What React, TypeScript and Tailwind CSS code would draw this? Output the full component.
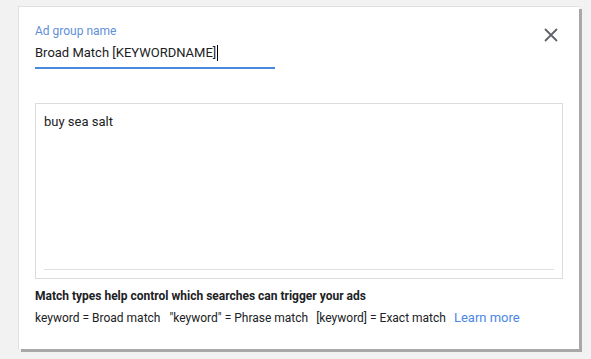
export default function App() {
  return (
    <div className="w-[591px] h-[359px] bg-[#f2f2f2] pt-[6px] pl-[18px] font-['Roboto',sans-serif]">
      <div className="relative w-[561px] h-[343px] bg-white border-l border-t border-[#e0e0e0] shadow-[3px_3px_0_#a8a8a8] px-4 pt-[16px]">
        <div className="w-[240px]">
          <div className="text-[12px] leading-[16px] text-[#5f8fd6]">Ad group name</div>
          <div className="mt-[6px] text-[13px] leading-[16px] text-[#202124] flex items-center">
            Broad Match [KEYWORDNAME]
            <span className="inline-block w-px h-[16px] bg-black ml-px" />
          </div>
          <div className="mt-[6px] h-[2px] bg-[#4a89dc]" />
        </div>

        <button className="absolute top-[20px] right-[20px] w-[16px] h-[16px] text-[#5f6368]">
          <svg viewBox="0 0 16 16" width="16" height="16">
            <path d="M2 2L14 14M14 2L2 14" stroke="currentColor" strokeWidth="1.8" fill="none" />
          </svg>
        </button>

        <div className="mt-[34px] w-[528px] h-[176px] border border-[#dcdcdc] flex flex-col px-[8px] pt-[10px] pb-[8px]">
          <div className="text-[13px] leading-[16px] text-[#202124] flex-1">buy sea salt</div>
          <div className="h-px bg-[#e0e0e0]" />
        </div>

        <div className="mt-[9px] text-[12px] leading-[16px] font-bold text-[#202124]">
          Match types help control which searches can trigger your ads
        </div>
        <div className="mt-[6px] text-[12px] leading-[16px] text-[#202124] flex items-baseline gap-[8px]">
          <span>keyword = Broad match</span>
          <span className="ml-px">"keyword" = Phrase match</span>
          <span>[keyword] = Exact match</span>
          <span className="text-[13px] text-[#4a86e8]">Learn more</span>
        </div>
      </div>
    </div>
  );
}
